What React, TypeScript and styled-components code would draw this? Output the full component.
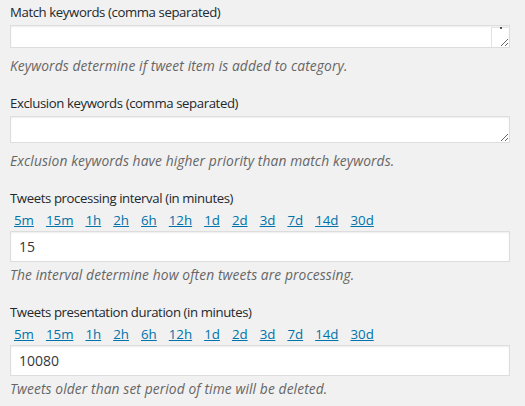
import React from "react"
import styled, { createGlobalStyle } from "styled-components"

const GlobalStyle = createGlobalStyle`
  html, body {
    margin: 0;
    padding: 0;
    background: #f1f1f1;
  }
  body {
    font-family: "Open Sans", "Noto Sans", sans-serif;
    font-size: 13px;
    color: #23282d;
  }
`

const Page = styled.div`
  width: 525px;
  height: 406px;
  padding: 2px 15px 0 10px;
  box-sizing: border-box;
  display: flex;
  flex-direction: column;
  gap: 18px;
  overflow: hidden;
`

const Field = styled.div`
  display: flex;
  flex-direction: column;
`

const Label = styled.label`
  display: block;
  font-size: 13.2px;
  letter-spacing: -0.4px;
  line-height: 20px;
  margin-bottom: 3px;
  color: #23282d;
`

const Presets = styled.div`
  display: flex;
  gap: 12px;
  padding-left: 4px;
  margin-top: -2px;
  line-height: 22px;
`

const Preset = styled.a`
  color: #0073aa;
  text-decoration: underline;
  font-size: 13.3px;
  cursor: pointer;
`

const AreaWrap = styled.div`
  position: relative;
  width: 500px;
`

const Area = styled.textarea<{ $h: number }>`
  display: block;
  box-sizing: border-box;
  width: 500px;
  height: ${p => p.$h}px;
  margin: 0;
  padding: 2px 6px;
  border: 1px solid #ddd;
  background: #fff;
  box-shadow: inset 0 1px 2px rgba(0, 0, 0, 0.07);
  font-family: inherit;
  font-size: 14px;
  resize: vertical;
  outline: none;
`

const ScrollTrack = styled.div`
  position: absolute;
  top: 2px;
  right: 2px;
  width: 16px;
  bottom: 1px;
  border-left: 1px solid #e2e2e2;
  border-top: 1px solid #e2e2e2;
  pointer-events: none;

  &::before {
    content: "";
    position: absolute;
    top: -1px;
    left: 8px;
    width: 2px;
    height: 2px;
    background: #505050;
  }
`

const Input = styled.input`
  display: block;
  box-sizing: border-box;
  width: 500px;
  height: 31px;
  margin: 0;
  padding: 3px 8px;
  border: 1px solid #ddd;
  background: #fff;
  box-shadow: inset 0 1px 2px rgba(0, 0, 0, 0.07);
  font-family: inherit;
  font-size: 14px;
  color: #32373c;
  outline: none;
`

const Description = styled.p<{ $gap: number }>`
  margin: ${p => p.$gap}px 0 0;
  font-size: 13.8px;
  letter-spacing: 0.1px;
  line-height: 18px;
  font-style: italic;
  color: #666;
`

const presets = ["5m", "15m", "1h", "2h", "6h", "12h", "1d", "2d", "3d", "7d", "14d", "30d"]

const PresetRow = () => (
  <Presets>
    {presets.map(p => (
      <Preset key={p}>{p}</Preset>
    ))}
  </Presets>
)

export default function App() {
  return (
    <Page>
      <GlobalStyle />
      <Field>
        <Label>Match keywords (comma separated)</Label>
        <AreaWrap>
          <Area $h={23} defaultValue="" />
          <ScrollTrack />
        </AreaWrap>
        <Description $gap={9}>Keywords determine if tweet item is added to category.</Description>
      </Field>
      <Field>
        <Label>Exclusion keywords (comma separated)</Label>
        <Area $h={27} defaultValue="" />
        <Description $gap={9}>Exclusion keywords have higher priority than match keywords.</Description>
      </Field>
      <Field>
        <Label>Tweets processing interval (in minutes)</Label>
        <PresetRow />
        <Input defaultValue="15" />
        <Description $gap={4}>The interval determine how often tweets are processing.</Description>
      </Field>
      <Field>
        <Label>Tweets presentation duration (in minutes)</Label>
        <PresetRow />
        <Input defaultValue="10080" />
        <Description $gap={4}>Tweets older than set period of time will be deleted.</Description>
      </Field>
    </Page>
  )
}
